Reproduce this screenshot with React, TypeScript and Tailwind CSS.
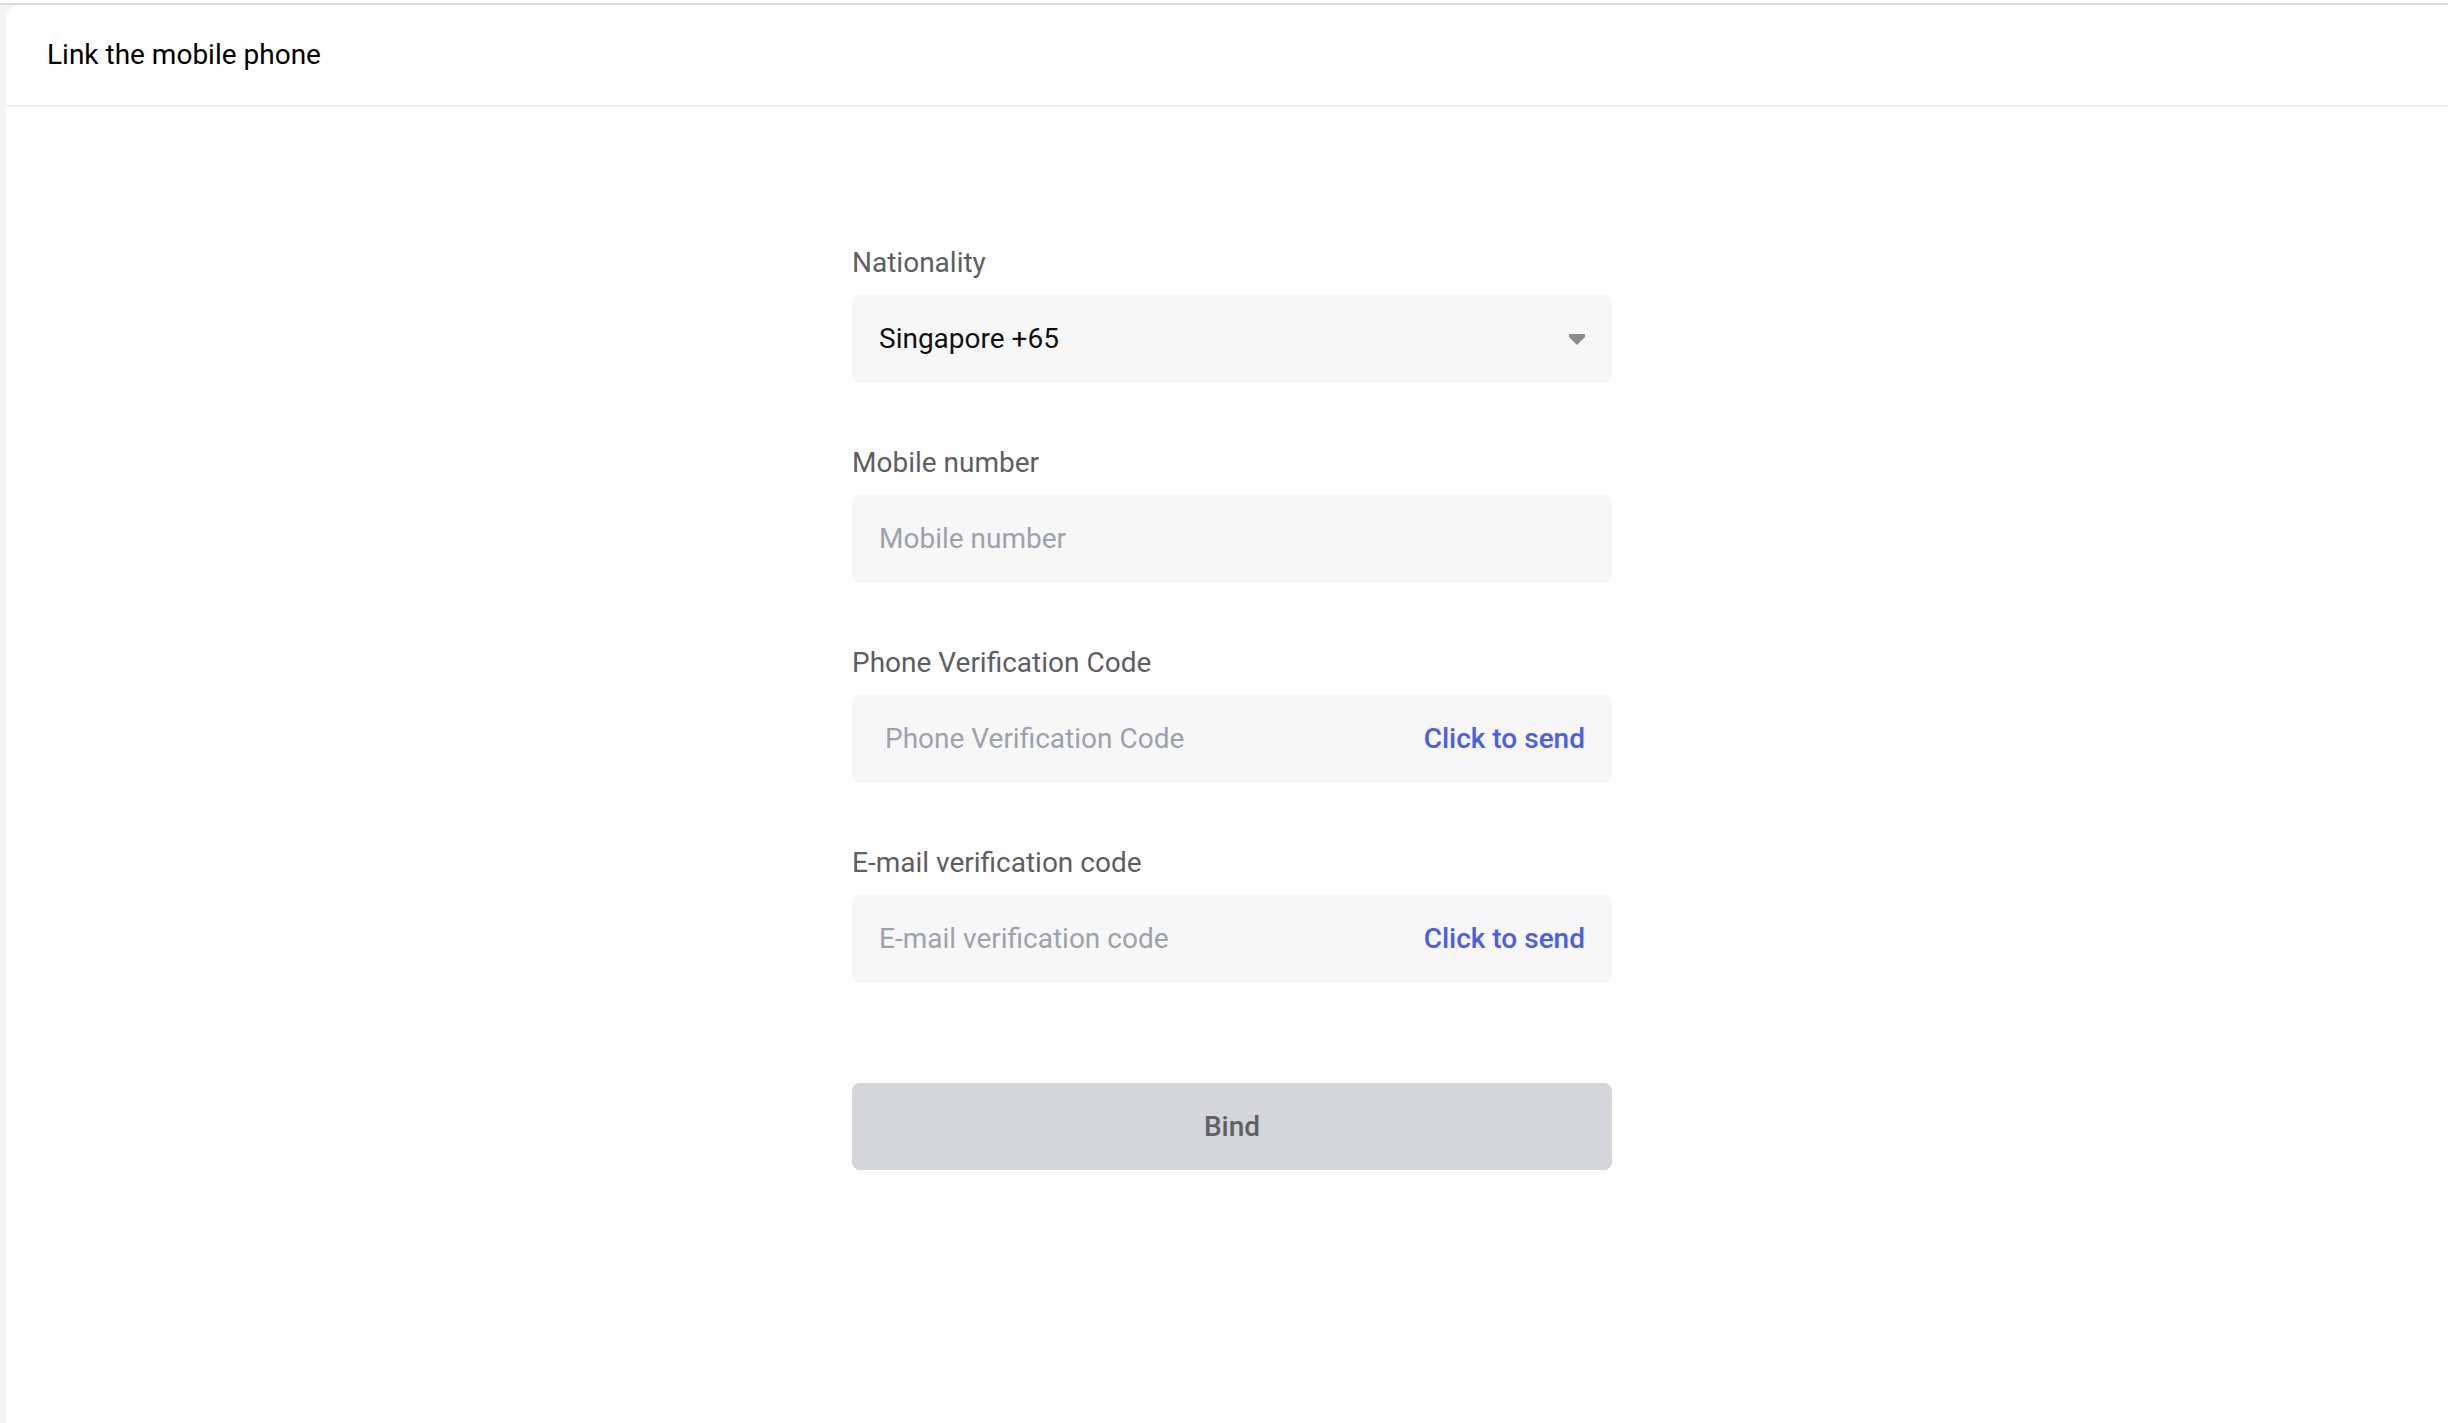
import React from "react";

function Label({ children }: { children: React.ReactNode }) {
  return (
    <div className="h-[40px] leading-[40px] text-[28px] text-[#5d5e64] mb-[12px]">
      {children}
    </div>
  );
}

export default function App() {
  return (
    <div
      className="w-[2448px] h-[1423px] flex flex-col bg-white overflow-hidden"
      style={{ fontFamily: "Roboto, 'Liberation Sans', sans-serif" }}
    >
      <div className="h-[3px] bg-white" />
      <div className="h-[2px] bg-[#dcdcdf]" />
      <div className="flex-1 flex bg-[#f4f4f4] pl-[6px]">
        <div className="flex-1 flex flex-col bg-[#fefefe] rounded-tl-[14px]">
          <div className="h-[102px] flex items-center pl-[41px] border-b-2 border-[#f0f0f0]">
            <span className="text-[28px] leading-[40px] text-black">Link the mobile phone</span>
          </div>
          <div className="ml-[846px] w-[760px] pt-[136px] flex flex-col">
            <Label>Nationality</Label>
            <div className="h-[88px] rounded-[8px] bg-[#f7f7f7] flex items-center justify-between pl-[27px] pr-[27px]">
              <span className="text-[28px] text-[#111111]">Singapore +65</span>
              <svg width="16" height="11" viewBox="0 0 16 11">
                <path d="M0 0 H16 V3 L8 11 L0 3 Z" fill="#8c8c8c" />
              </svg>
            </div>

            <div className="h-[60px]" />
            <Label>Mobile number</Label>
            <div className="h-[88px] rounded-[8px] bg-[#f7f7f7] flex items-center pl-[27px] pr-[27px]">
              <input
                className="w-full bg-transparent outline-none text-[28px] text-[#111111] placeholder:text-[#9ea2ad]"
                placeholder="Mobile number"
              />
            </div>

            <div className="h-[60px]" />
            <Label>Phone Verification Code</Label>
            <div className="h-[88px] rounded-[8px] bg-[#f7f7f7] flex items-center pl-[33px] pr-[27px]">
              <input
                className="flex-1 min-w-0 bg-transparent outline-none text-[28px] text-[#111111] placeholder:text-[#9ea2ad]"
                placeholder="Phone Verification Code"
              />
              <span className="text-[28px] font-medium text-[#4a5cf2] whitespace-nowrap">Click to send</span>
            </div>

            <div className="h-[60px]" />
            <Label>E-mail verification code</Label>
            <div className="h-[88px] rounded-[8px] bg-[#f7f7f7] flex items-center pl-[27px] pr-[27px]">
              <input
                className="flex-1 min-w-0 bg-transparent outline-none text-[28px] text-[#111111] placeholder:text-[#9ea2ad]"
                placeholder="E-mail verification code"
              />
              <span className="text-[28px] font-medium text-[#4a5cf2] whitespace-nowrap">Click to send</span>
            </div>

            <div className="h-[100px]" />
            <button className="h-[87px] rounded-[8px] bg-[#d5d6d9] text-[28px] font-medium text-[#5f6066]">
              Bind
            </button>
          </div>
        </div>
      </div>
    </div>
  );
}
